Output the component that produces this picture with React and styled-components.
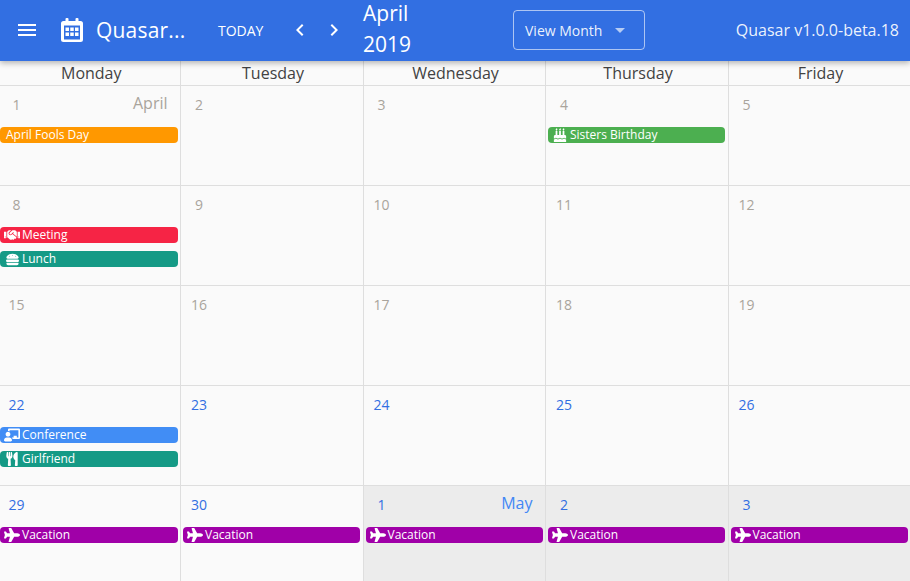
import React from "react";
import styled, { createGlobalStyle } from "styled-components";
import { MdMenu, MdChevronLeft, MdChevronRight, MdArrowDropDown } from "react-icons/md";
import {
  FaBirthdayCake,
  FaHandshake,
  FaHamburger,
  FaChalkboardTeacher,
  FaUtensils,
  FaPlane,
} from "react-icons/fa";

const GlobalStyle = createGlobalStyle`
  html, body {
    margin: 0;
    padding: 0;
    height: 100%;
    overflow: hidden;
    background: #fff;
    font-family: "Open Sans", "Noto Sans", sans-serif;
  }
  * { box-sizing: border-box; }
`;

const Page = styled.div`
  width: 910px;
  height: 581px;
  display: flex;
  flex-direction: column;
  overflow: hidden;
`;

const Toolbar = styled.header`
  height: 61px;
  flex: none;
  display: flex;
  align-items: center;
  padding-bottom: 1px;
  background: #326fe2;
  color: #fff;
  box-shadow: 0 2px 6px rgba(0, 0, 0, 0.3);
  position: relative;
  z-index: 2;
`;

const MenuButton = styled.div`
  width: 54px;
  display: flex;
  justify-content: center;
  font-size: 24px;
  line-height: 0;
`;

const CalIcon = styled.svg`
  width: 22px;
  height: 24px;
  flex: none;
  margin-left: 7px;
`;

const Title = styled.div`
  font-size: 21px;
  margin-left: 13px;
  width: 94px;
  letter-spacing: 0.2px;
`;

const TodayButton = styled.div`
  font-size: 14px;
  margin-left: 28px;
  width: 46px;
`;

const Chevron = styled.div`
  font-size: 24px;
  line-height: 0;
  width: 24px;
  margin-left: ${(p) => p.$gap}px;
`;

const MonthTitle = styled.div`
  font-size: 21px;
  line-height: 31px;
  width: 60px;
  margin-left: 17px;
  margin-bottom: 2px;
`;

const ViewSelect = styled.div`
  width: 132px;
  height: 40px;
  margin-left: 90px;
  border: 1px solid rgba(255, 255, 255, 0.6);
  border-radius: 4px;
  display: flex;
  align-items: center;
  padding-left: 11px;
  font-size: 14px;
  color: rgba(255, 255, 255, 0.92);
  svg {
    font-size: 24px;
    margin-left: 6px;
    opacity: 0.7;
  }
`;

const Version = styled.div`
  margin-left: auto;
  margin-right: 11px;
  font-size: 16px;
  color: rgba(255, 255, 255, 0.92);
`;

const Calendar = styled.div`
  flex: 1;
  min-height: 0;
  display: grid;
  grid-template-columns: 181px repeat(4, 182.5px);
  grid-template-rows: 25px repeat(5, 100px);
  background: #fafafa;
`;

const DayHead = styled.div`
  font-size: 16px;
  line-height: 24px;
  text-align: center;
  padding-left: 2.5px;
  color: #424242;
  border-right: 1px solid #dedede;
  border-bottom: 1px solid #dedede;
`;

const Cell = styled.div`
  border-right: 1px solid #dedede;
  border-bottom: 1px solid #dedede;
  background: ${(p) => (p.$outside ? "#ececec" : "transparent")};
  display: flex;
  flex-direction: column;
  min-width: 0;
`;

const CellTop = styled.div`
  height: 41px;
  display: flex;
  justify-content: space-between;
  padding: 8px 12.5px 0 ${(p) => (p.$first ? 4.5 : 6)}px;
  color: ${(p) => (p.$current ? "#326fe2" : "#a9a49c")};
`;

const DayNum = styled.div`
  width: 24px;
  text-align: center;
  font-size: 14px;
  line-height: 20px;
  padding-top: 1px;
`;

const MonthTag = styled.div`
  font-size: 16px;
  line-height: 18px;
  color: ${(p) => (p.$current ? "#4287f5" : "#a9a49c")};
`;

const Events = styled.div`
  display: flex;
  flex-direction: column;
  gap: 8px;
`;

const EventBar = styled.div`
  height: 16px;
  margin: 0 2.5px 0 ${(p) => (p.$first ? 0 : 2)}px;
  background: ${(p) => p.$color};
  border-radius: 4px;
  color: #fff;
  font-size: 12px;
  line-height: 16px;
  display: flex;
  align-items: center;
  white-space: nowrap;
  padding-left: ${(p) => (p.$hasIcon ? 3 : 6)}px;
`;

const EventIcon = styled.span`
  width: 18px;
  margin-right: 1px;
  flex: none;
  display: flex;
  justify-content: center;
  font-size: ${(p) => p.$size}px;
  line-height: 0;
`;

const days = ["Monday", "Tuesday", "Wednesday", "Thursday", "Friday"];

const ORANGE = "#ff9800";
const RED = "#f62445";
const TEAL = "#159a86";
const GREEN = "#4caf50";
const BLUE = "#418df5";
const PURPLE = "#a000a8";

const vacation = [{ label: "Vacation", color: PURPLE, icon: FaPlane, size: 16 }];

const rows = [
  [
    { n: 1, month: "April", events: [{ label: "April Fools Day", color: ORANGE }] },
    { n: 2 },
    { n: 3 },
    { n: 4, events: [{ label: "Sisters Birthday", color: GREEN, icon: FaBirthdayCake, size: 14 }] },
    { n: 5 },
  ],
  [
    {
      n: 8,
      events: [
        { label: "Meeting", color: RED, icon: FaHandshake, size: 16 },
        { label: "Lunch", color: TEAL, icon: FaHamburger, size: 13 },
      ],
    },
    { n: 9 },
    { n: 10 },
    { n: 11 },
    { n: 12 },
  ],
  [{ n: 15 }, { n: 16 }, { n: 17 }, { n: 18 }, { n: 19 }],
  [
    {
      n: 22,
      current: true,
      events: [
        { label: "Conference", color: BLUE, icon: FaChalkboardTeacher, size: 16 },
        { label: "Girlfriend", color: TEAL, icon: FaUtensils, size: 14 },
      ],
    },
    { n: 23, current: true },
    { n: 24, current: true },
    { n: 25, current: true },
    { n: 26, current: true },
  ],
  [
    { n: 29, current: true, events: vacation },
    { n: 30, current: true, events: vacation },
    { n: 1, current: true, outside: true, month: "May", events: vacation },
    { n: 2, current: true, outside: true, events: vacation },
    { n: 3, current: true, outside: true, events: vacation },
  ],
];

function CalendarGlyph() {
  const squares = [];
  [9.5, 14.5].forEach((y) =>
    [4.5, 9.25, 14].forEach((x) => {
      squares.push(<rect key={`${x}-${y}`} x={x} y={y} width="3.5" height="3.5" />);
    })
  );
  return (
    <CalIcon viewBox="0 0 22 24" fill="#fff">
      <rect x="4.5" y="0" width="3" height="5" rx="1" />
      <rect x="14.5" y="0" width="3" height="5" rx="1" />
      <path
        fillRule="evenodd"
        d="M2.5 3H19.500A2.500 2.500 0 0 1 22 5.500V21.500A2.500 2.500 0 0 1 19.500 24H2.500A2.500 2.500 0 0 1 0 21.500V5.500A2.500 2.500 0 0 1 2.500 3ZM3 7.500V21.500H19V7.500Z"
      />
      {squares}
    </CalIcon>
  );
}

function DayCell({ day, first }) {
  return (
    <Cell $outside={day.outside}>
      <CellTop $current={day.current} $first={first}>
        <DayNum>{day.n}</DayNum>
        {day.month && <MonthTag $current={day.current}>{day.month}</MonthTag>}
      </CellTop>
      <Events>
        {(day.events || []).map((ev) => (
          <EventBar key={ev.label} $color={ev.color} $first={first} $hasIcon={!!ev.icon}>
            {ev.icon && (
              <EventIcon $size={ev.size}>
                <ev.icon />
              </EventIcon>
            )}
            {ev.label}
          </EventBar>
        ))}
      </Events>
    </Cell>
  );
}

export default function App() {
  return (
    <Page>
      <GlobalStyle />
      <Toolbar>
        <MenuButton>
          <MdMenu />
        </MenuButton>
        <CalendarGlyph />
        <Title>Quasar...</Title>
        <TodayButton>TODAY</TodayButton>
        <Chevron $gap={24}>
          <MdChevronLeft />
        </Chevron>
        <Chevron $gap={10}>
          <MdChevronRight />
        </Chevron>
        <MonthTitle>
          April
          <br />
          2019
        </MonthTitle>
        <ViewSelect>
          View Month
          <MdArrowDropDown />
        </ViewSelect>
        <Version>Quasar v1.0.0-beta.18</Version>
      </Toolbar>
      <Calendar>
        {days.map((d) => (
          <DayHead key={d}>{d}</DayHead>
        ))}
        {rows.map((row) =>
          row.map((day, i) => <DayCell key={`${row[0].n}-${i}`} day={day} first={i === 0} />)
        )}
      </Calendar>
    </Page>
  );
}
